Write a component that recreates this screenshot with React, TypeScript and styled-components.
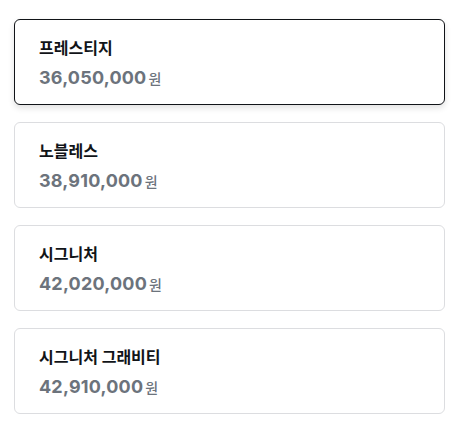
import React from 'react';
import styled, { createGlobalStyle } from 'styled-components';

const GlobalStyle = createGlobalStyle`
    body {
        margin: 0;
        background: #ffffff;
        font-family: Inter, "Noto Sans CJK KR", sans-serif;
    }
`;

const List = styled.div`
    display: flex;
    flex-direction: column;
    gap: 17px;
    padding: 19px 12px 10px 14px;
`;

const Card = styled.div<{ selected: boolean }>`
    height: 86px;
    box-sizing: border-box;
    padding: 17px 24px;
    border-radius: 6px;
    background: #ffffff;
    border: 1px solid ${(props) => (props.selected ? '#111418' : '#dcdde0')};
    box-shadow: ${(props) => (props.selected ? '0 3px 6px rgba(0, 0, 0, 0.12)' : 'none')};
    display: flex;
    flex-direction: column;
    gap: 6px;
`;

const Title = styled.div`
    font-size: 16px;
    font-weight: 700;
    color: #111418;
    line-height: 22px;
`;

const Price = styled.div`
    display: flex;
    align-items: baseline;
    gap: 2px;
    color: #6c737c;
`;

const Amount = styled.span`
    font-size: 18px;
    font-weight: 700;
    line-height: 26px;
    letter-spacing: 0.2px;
`;

const Unit = styled.span`
    font-size: 14px;
    font-weight: 500;
`;

const trims = [
    { name: '프레스티지', price: '36,050,000' },
    { name: '노블레스', price: '38,910,000' },
    { name: '시그니처', price: '42,020,000' },
    { name: '시그니처 그래비티', price: '42,910,000' },
];

export default function App() {
    return (
        <>
            <GlobalStyle />
            <List>
                {trims.map((trim, i) => (
                    <Card key={trim.name} selected={i === 0}>
                        <Title>{trim.name}</Title>
                        <Price>
                            <Amount>{trim.price}</Amount>
                            <Unit>원</Unit>
                        </Price>
                    </Card>
                ))}
            </List>
        </>
    );
}
